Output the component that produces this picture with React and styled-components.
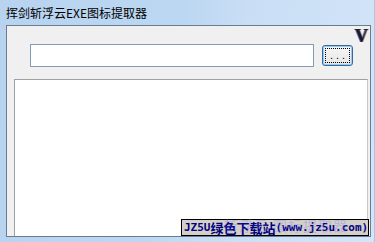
import styled, { createGlobalStyle } from 'styled-components';

const Global = createGlobalStyle`
    html, body {
        margin: 0;
        padding: 0;
        overflow: hidden;
    }
`;

const Frame = styled.div`
    width: 375px;
    height: 242px;
    box-sizing: border-box;
    display: flex;
    flex-direction: column;
    padding: 0 3px 5px 6px;
    background: linear-gradient(100deg, #b8d3ef 0%, #bcd7f2 45%, #c9def5 60%, #d3e5f8 100%);
    border-right: 1px solid #b0c4dc;
    font-family: "Noto Sans CJK SC", "Liberation Sans", sans-serif;
`;

const TitleBar = styled.div`
    height: 26px;
    display: flex;
    align-items: center;
    font-size: 12px;
    color: #000;
    margin-top: -1px;
`;

const Client = styled.div`
    flex: 1;
    position: relative;
    display: flex;
    flex-direction: column;
    background: #f0f0f0;
    border: 1px solid #6b7c92;
    overflow: hidden;
`;

const Toolbar = styled.div`
    display: flex;
    align-items: flex-start;
    padding: 18px 0 0 23px;
`;

const PathInput = styled.div`
    width: 284px;
    height: 23px;
    box-sizing: border-box;
    background: #fff;
    border: 1px solid #7f9db9;
`;

const BrowseButton = styled.div`
    margin: 1px 0 0 8px;
    width: 31px;
    height: 21px;
    box-sizing: border-box;
    border: 1px solid #2f69a8;
    border-radius: 3px;
    padding: 2px;
    background: linear-gradient(#f6f6f6, #e6e6e6);
    box-shadow: inset 0 0 0 1px #9ec8ea;
`;

const FocusRing = styled.div`
    height: 100%;
    box-sizing: border-box;
    border: 1px dotted #000;
    display: flex;
    align-items: center;
    justify-content: center;
    font-family: "Liberation Sans", sans-serif;
    font-size: 11px;
    letter-spacing: 3px;
    padding-left: 3px;
    line-height: 1;
    color: #000;
`;

const VersionMark = styled.div`
    position: absolute;
    top: 0;
    right: 2px;
    font-family: "Liberation Serif", serif;
    font-weight: bold;
    font-size: 18px;
    color: #1a1a40;
    text-shadow: -1px 0 #2e6bd8, 1px 0 #e08a10;
`;

const IconList = styled.div`
    flex: 1;
    margin: 12px 2px 0 7px;
    background: #fff;
    border-top: 1px solid #a0a0a0;
    border-left: 1px solid #a0a0a0;
    border-right: 1px solid #c8c8c8;
`;

const Watermark = styled.div`
    position: absolute;
    right: 1px;
    bottom: 0;
    width: 188px;
    height: 17px;
    box-sizing: border-box;
    background: #d4d0c8;
    border: 1px solid #000;
    display: flex;
    align-items: center;
    padding-left: 2px;
    font-family: "DejaVu Sans Mono", monospace;
    font-weight: bold;
    font-size: 11px;
    color: #000080;
    white-space: nowrap;
`;

const Cjk = styled.span`
    font-family: "Noto Sans CJK SC", sans-serif;
    font-size: 13px;
    line-height: 1;
`;

const GhostText = styled.div`
    position: absolute;
    right: 22px;
    bottom: 1px;
    font-size: 14px;
    color: rgba(110, 110, 255, 0.3);
    white-space: nowrap;
    letter-spacing: 1px;
    pointer-events: none;
`;

const App = () => {
    return (
        <Frame>
            <Global />
            <TitleBar>挥剑斩浮云EXE图标提取器</TitleBar>
            <Client>
                <Toolbar>
                    <PathInput />
                    <BrowseButton>
                        <FocusRing>...</FocusRing>
                    </BrowseButton>
                </Toolbar>
                <VersionMark>V</VersionMark>
                <IconList />
                <Watermark>
                    JZ5U<Cjk>绿色下载站</Cjk>(www.jz5u.com)
                </Watermark>
                <GhostText>斩浮云  图标提取器</GhostText>
            </Client>
        </Frame>
    );
}

export default App;
